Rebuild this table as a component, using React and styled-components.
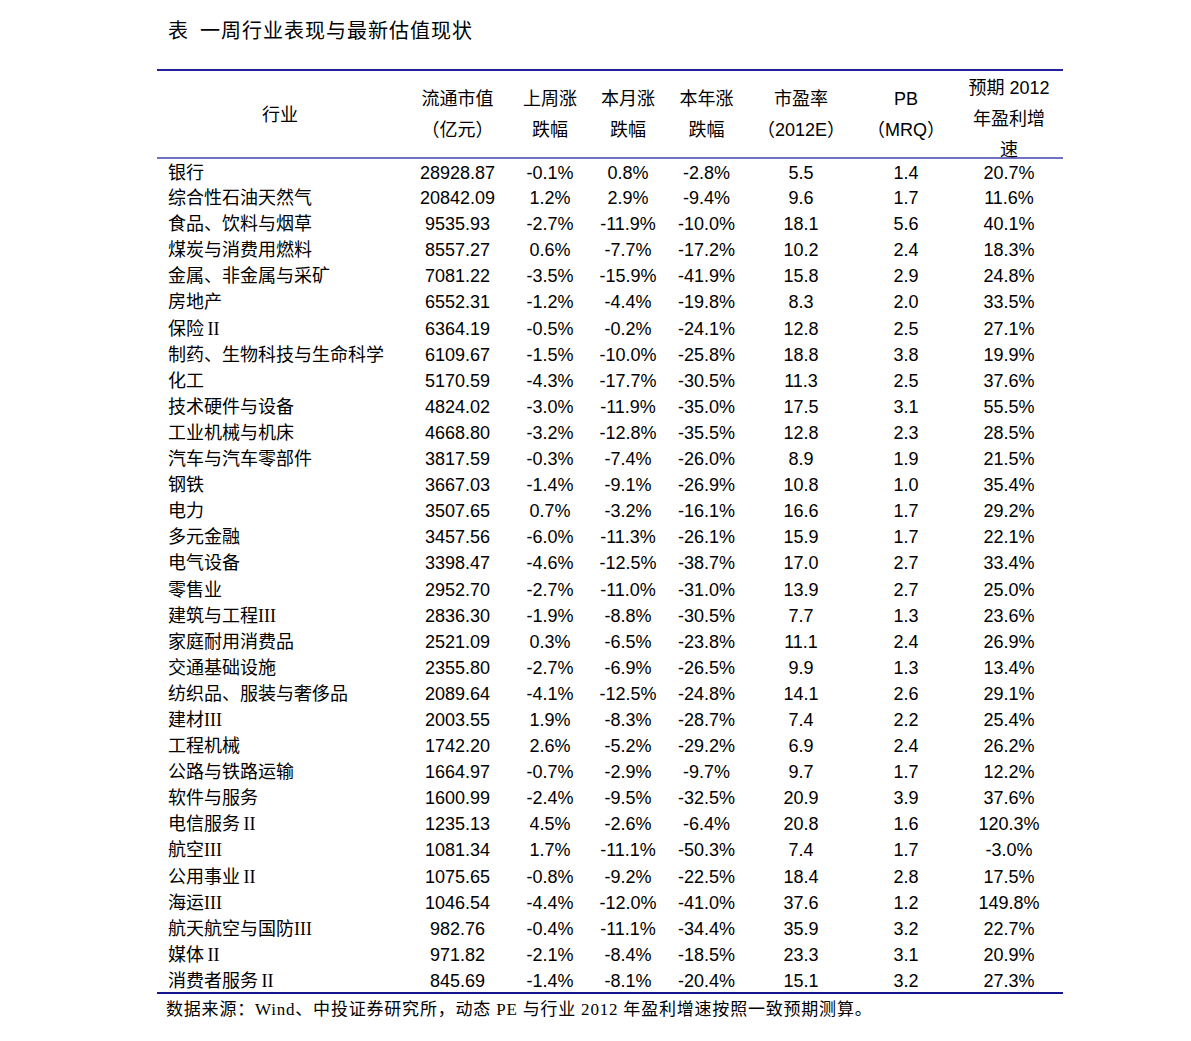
import styled, { createGlobalStyle } from 'styled-components';

const GlobalStyle = createGlobalStyle`
  html, body {
    margin: 0;
    padding: 0;
    background: #ffffff;
  }
  body {
    font-family: "Liberation Sans", "Noto Sans CJK SC", sans-serif;
    color: #000000;
    text-spacing-trim: space-all;
  }
`;

const rows = [
  ['银行', '28928.87', '-0.1%', '0.8%', '-2.8%', '5.5', '1.4', '20.7%'],
  ['综合性石油天然气', '20842.09', '1.2%', '2.9%', '-9.4%', '9.6', '1.7', '11.6%'],
  ['食品、饮料与烟草', '9535.93', '-2.7%', '-11.9%', '-10.0%', '18.1', '5.6', '40.1%'],
  ['煤炭与消费用燃料', '8557.27', '0.6%', '-7.7%', '-17.2%', '10.2', '2.4', '18.3%'],
  ['金属、非金属与采矿', '7081.22', '-3.5%', '-15.9%', '-41.9%', '15.8', '2.9', '24.8%'],
  ['房地产', '6552.31', '-1.2%', '-4.4%', '-19.8%', '8.3', '2.0', '33.5%'],
  ['保险\u2009II', '6364.19', '-0.5%', '-0.2%', '-24.1%', '12.8', '2.5', '27.1%'],
  ['制药、生物科技与生命科学', '6109.67', '-1.5%', '-10.0%', '-25.8%', '18.8', '3.8', '19.9%'],
  ['化工', '5170.59', '-4.3%', '-17.7%', '-30.5%', '11.3', '2.5', '37.6%'],
  ['技术硬件与设备', '4824.02', '-3.0%', '-11.9%', '-35.0%', '17.5', '3.1', '55.5%'],
  ['工业机械与机床', '4668.80', '-3.2%', '-12.8%', '-35.5%', '12.8', '2.3', '28.5%'],
  ['汽车与汽车零部件', '3817.59', '-0.3%', '-7.4%', '-26.0%', '8.9', '1.9', '21.5%'],
  ['钢铁', '3667.03', '-1.4%', '-9.1%', '-26.9%', '10.8', '1.0', '35.4%'],
  ['电力', '3507.65', '0.7%', '-3.2%', '-16.1%', '16.6', '1.7', '29.2%'],
  ['多元金融', '3457.56', '-6.0%', '-11.3%', '-26.1%', '15.9', '1.7', '22.1%'],
  ['电气设备', '3398.47', '-4.6%', '-12.5%', '-38.7%', '17.0', '2.7', '33.4%'],
  ['零售业', '2952.70', '-2.7%', '-11.0%', '-31.0%', '13.9', '2.7', '25.0%'],
  ['建筑与工程III', '2836.30', '-1.9%', '-8.8%', '-30.5%', '7.7', '1.3', '23.6%'],
  ['家庭耐用消费品', '2521.09', '0.3%', '-6.5%', '-23.8%', '11.1', '2.4', '26.9%'],
  ['交通基础设施', '2355.80', '-2.7%', '-6.9%', '-26.5%', '9.9', '1.3', '13.4%'],
  ['纺织品、服装与奢侈品', '2089.64', '-4.1%', '-12.5%', '-24.8%', '14.1', '2.6', '29.1%'],
  ['建材III', '2003.55', '1.9%', '-8.3%', '-28.7%', '7.4', '2.2', '25.4%'],
  ['工程机械', '1742.20', '2.6%', '-5.2%', '-29.2%', '6.9', '2.4', '26.2%'],
  ['公路与铁路运输', '1664.97', '-0.7%', '-2.9%', '-9.7%', '9.7', '1.7', '12.2%'],
  ['软件与服务', '1600.99', '-2.4%', '-9.5%', '-32.5%', '20.9', '3.9', '37.6%'],
  ['电信服务\u2009II', '1235.13', '4.5%', '-2.6%', '-6.4%', '20.8', '1.6', '120.3%'],
  ['航空III', '1081.34', '1.7%', '-11.1%', '-50.3%', '7.4', '1.7', '-3.0%'],
  ['公用事业\u2009II', '1075.65', '-0.8%', '-9.2%', '-22.5%', '18.4', '2.8', '17.5%'],
  ['海运III', '1046.54', '-4.4%', '-12.0%', '-41.0%', '37.6', '1.2', '149.8%'],
  ['航天航空与国防III', '982.76', '-0.4%', '-11.1%', '-34.4%', '35.9', '3.2', '22.7%'],
  ['媒体\u2009II', '971.82', '-2.1%', '-8.4%', '-18.5%', '23.3', '3.1', '20.9%'],
  ['消费者服务\u2009II', '845.69', '-1.4%', '-8.1%', '-20.4%', '15.1', '3.2', '27.3%'],
];

const columns = [246, 109, 76, 80, 77, 112, 98, 108];

const headers = [
  ['流通市值', '（亿元）'],
  ['上周涨', '跌幅'],
  ['本月涨', '跌幅'],
  ['本年涨', '跌幅'],
  ['市盈率', '（2012E）'],
  ['PB', '（MRQ）'],
];

export default function App() {
  return (
    <Page>
      <GlobalStyle />
      <Title>
        <TitleLabel>表</TitleLabel>
        一周行业表现与最新估值现状
      </Title>
      <Table>
        <colgroup>
          {columns.map((w, i) => (
            <col key={i} style={{ width: w }} />
          ))}
        </colgroup>
        <thead>
          <HeadRow>
            <HeadCell>
              <HeadBox>行业</HeadBox>
            </HeadCell>
            {headers.map((lines) => (
              <HeadCell key={lines[0]}>
                <HeadBox>
                  {lines.map((l) => (
                    <HeadLine key={l}>{l}</HeadLine>
                  ))}
                </HeadBox>
              </HeadCell>
            ))}
            <HeadCell>
              <HeadBox $top>
                <HeadLine>预期 2012</HeadLine>
                <HeadLine>年盈利增</HeadLine>
                <HeadLine>速</HeadLine>
              </HeadBox>
            </HeadCell>
          </HeadRow>
        </thead>
        <tbody>
          {rows.map((r) => (
            <Row key={r[0]}>
              <NameCell>{r[0]}</NameCell>
              {r.slice(1).map((v, i) => (
                <ValueCell key={i}>{v}</ValueCell>
              ))}
            </Row>
          ))}
        </tbody>
      </Table>
      <Source>
        数据来源：Wind、中投证券研究所，动态 PE 与行业 2012 年盈利增速按照一致预期测算。
      </Source>
    </Page>
  );
}

const Page = styled.div`
  width: 906px;
  padding-left: 157px;
  padding-bottom: 20px;
`;

const Title = styled.div`
  padding: 20px 0 0 11px;
  margin-bottom: 27px;
  height: 22px;
  font-family: "Liberation Serif", "Noto Sans CJK SC", serif;
  font-size: 20px;
  line-height: 22px;
  letter-spacing: 1px;
  white-space: nowrap;
`;

const TitleLabel = styled.span`
  margin-right: 11px;
`;

const Table = styled.table`
  width: 906px;
  table-layout: fixed;
  border-collapse: collapse;
  border-top: 2px solid #22229c;
  border-bottom: 2px solid #15158f;
`;

const HeadRow = styled.tr`
  border-bottom: 2px solid #7070c4;
`;

const HeadCell = styled.th`
  padding: 0;
  font-weight: normal;
  vertical-align: top;
`;

const HeadBox = styled.div`
  height: 86px;
  display: flex;
  flex-direction: column;
  justify-content: ${(p) => (p.$top ? 'flex-start' : 'center')};
  align-items: center;
  padding-top: 2px;
  box-sizing: border-box;
  font-size: 18px;
  line-height: 31px;
  white-space: nowrap;
`;

const HeadLine = styled.span`
  display: block;
`;

const Row = styled.tr`
  height: 26.1px;
`;

const NameCell = styled.td`
  padding: 3px 0 0 11px;
  vertical-align: top;
  font-family: "Liberation Serif", "Noto Sans CJK SC", serif;
  font-size: 18px;
  line-height: 22px;
  white-space: nowrap;
`;

const ValueCell = styled.td`
  padding: 3px 0 0 0;
  vertical-align: top;
  text-align: center;
  font-size: 18px;
  line-height: 22px;
  white-space: nowrap;
`;

const Source = styled.div`
  padding: 6px 0 0 9px;
  font-family: "Liberation Serif", "Noto Sans CJK SC", serif;
  font-size: 17px;
  line-height: 20px;
  letter-spacing: 0.8px;
  white-space: nowrap;
`;
